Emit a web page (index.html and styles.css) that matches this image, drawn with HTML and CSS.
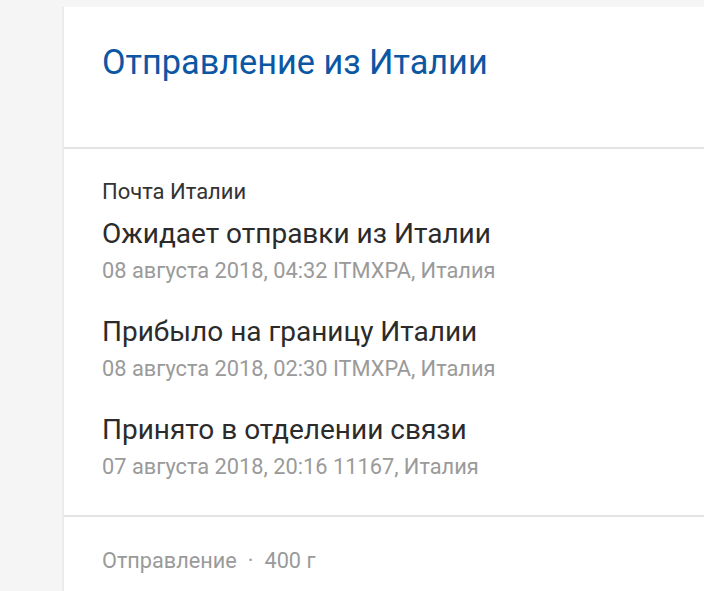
FILE: index.html
```html
<!DOCTYPE html>
<html lang="ru">
<head>
<meta charset="utf-8">
<link rel="stylesheet" href="styles.css">
</head>
<body>
<div class="page">
  <div class="card">
    <div class="card-head">
      <h1 class="title">Отправление из Италии</h1>
    </div>
    <div class="card-body">
      <div class="carrier">Почта Италии</div>
      <div class="event">
        <div class="event-title">Ожидает отправки из Италии</div>
        <div class="event-meta">08 августа 2018, 04:32 ITMXPA, Италия</div>
      </div>
      <div class="event">
        <div class="event-title">Прибыло на границу Италии</div>
        <div class="event-meta">08 августа 2018, 02:30 ITMXPA, Италия</div>
      </div>
      <div class="event">
        <div class="event-title">Принято в отделении связи</div>
        <div class="event-meta">07 августа 2018, 20:16 11167, Италия</div>
      </div>
    </div>
    <div class="card-foot">
      <span class="foot-text">Отправление<span class="dot">·</span>400 г</span>
    </div>
  </div>
</div>
</body>
</html>
```
FILE: styles.css
```css
html, body {
  margin: 0;
  padding: 0;
  background: #f5f5f5;
  font-family: Roboto, "Noto Sans", sans-serif;
}
.page {
  padding: 7px 0 0 62px;
  height: 584px;
  overflow: hidden;
}
.card {
  background: #fff;
  border-left: 2px solid #ebebeb;
  min-height: 600px;
}
.card-head {
  padding: 35px 38px 0;
  height: 105px;
  border-bottom: 2px solid #e4e4e4;
}
.title {
  margin: 0;
  font-size: 34.25px;
  font-weight: 400;
  line-height: 40px;
  color: #0b57a4;
}
.card-body {
  padding: 29px 38px 31px;
  border-bottom: 2px solid #e4e4e4;
}
.carrier {
  font-size: 22px;
  line-height: 28px;
  color: #333;
  margin-bottom: 8px;
}
.event {
  margin-bottom: 24px;
}
.event:last-child { margin-bottom: 0; }
.event-title {
  font-size: 28px;
  line-height: 40px;
  color: #2b2b2b;
}
.event-meta {
  font-size: 21.8px;
  line-height: 34px;
  color: #9a9a9a;
}
.card-foot {
  padding: 30px 38px;
}
.foot-text {
  font-size: 21.7px;
  line-height: 28px;
  color: #9a9a9a;
}
.dot {
  margin: 0 11px;
}
```
